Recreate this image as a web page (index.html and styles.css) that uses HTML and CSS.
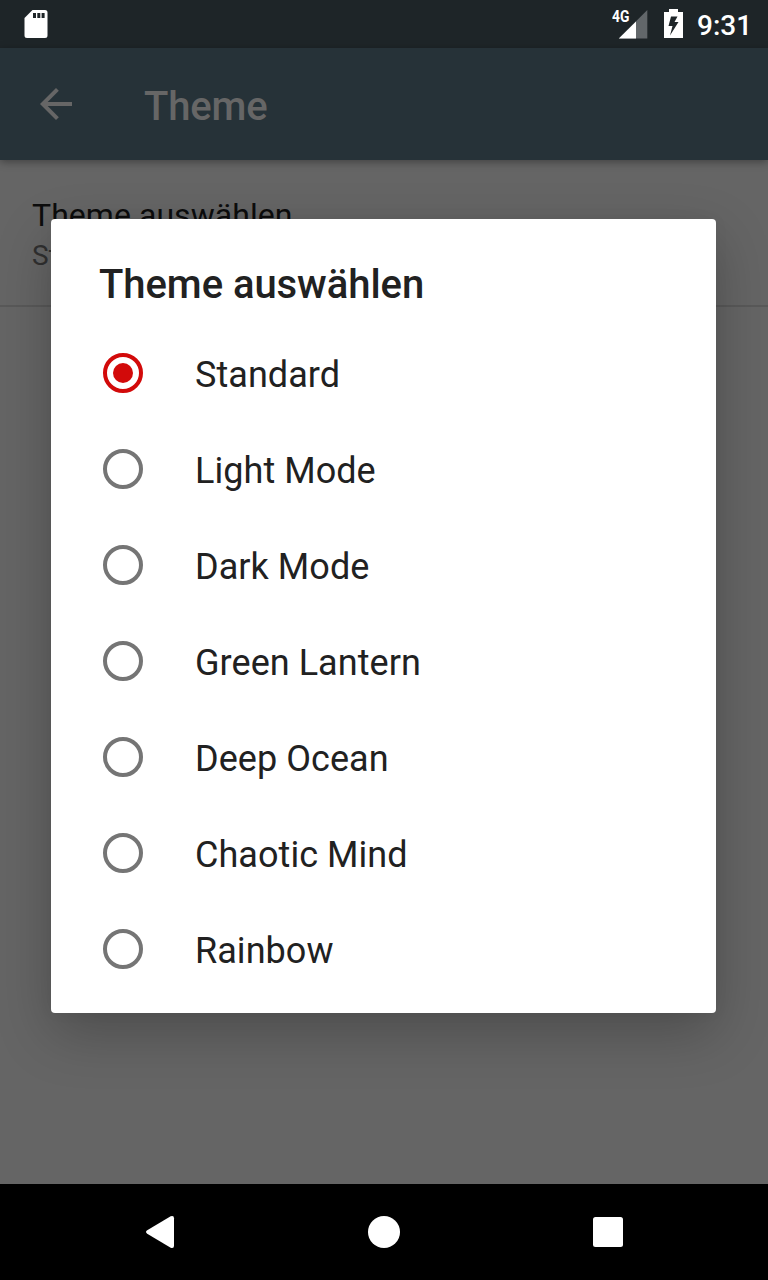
FILE: index.html
```html
<!DOCTYPE html>
<html lang="de">
<head>
<meta charset="utf-8">
<title>Theme</title>
<link rel="stylesheet" href="styles.css">
</head>
<body>
<div class="screen">
  <header class="status-bar">
    <svg class="sd-icon" width="24" height="30" viewBox="0 0 24 30"><path fill="#fff" fill-rule="evenodd" d="M8.500 0H21a2.500 2.500 0 0 1 2.500 2.500V25.500A2.500 2.500 0 0 1 21 28H3A2.500 2.500 0 0 1 .5 25.500V8zM9 3v5h3V3zM13.300 3v5h3V3zM17.600 3v5h3V3z"/></svg>
    <div class="status-right">
      <div class="signal">
        <span class="network">4G</span>
        <svg class="signal-icon" width="30" height="30" viewBox="0 0 30 30"><path fill="#62676a" d="M29.300 0V28.500H.8z"/><path fill="#fff" d="M18 11.500V28.500H.8z"/></svg>
      </div>
      <svg class="battery" width="19" height="30" viewBox="0 0 19 30"><path fill="#fff" fill-rule="evenodd" d="M5 0h9v3h5v26H0V3h5zM7 7.500L4.500 17H8.500L6 26.500L14.500 13H10.500L13.500 7.500z"/></svg>
      <span class="clock">9:31</span>
    </div>
  </header>
  <div class="app-bar">
    <svg class="back" width="32" height="32" viewBox="0 0 32 32"><path fill="#666" d="M32 14H7.660L18.840 2.820L16 0L0 16L16 32L18.820 29.180L7.660 18H32z"/></svg>
    <h1 class="app-title">Theme</h1>
  </div>
  <main class="content">
    <div class="preference">
      <div class="pref-title">Theme auswählen</div>
      <div class="pref-summary">Standard</div>
    </div>
  </main>
  <nav class="nav-bar">
    <svg width="32" height="34" viewBox="0 0 32 34"><path fill="#fff" d="M3.200 15.300L26.700 1.200Q30 0 30 3.300V30.700Q30 34 26.700 32.800L3.200 18.700Q.8 17 3.200 15.300z"/></svg>
    <svg width="32" height="32" viewBox="0 0 32 32"><circle cx="16" cy="16" r="16" fill="#fff"/></svg>
    <svg width="32" height="32" viewBox="0 0 32 32"><rect x="1" y="1" width="30" height="30" rx="2.500" fill="#fff"/></svg>
  </nav>
  <section class="dialog" role="dialog">
    <h2 class="dialog-title">Theme auswählen</h2>
    <ul class="options">
      <li class="option"><span class="radio checked"></span><span>Standard</span></li>
      <li class="option"><span class="radio"></span><span>Light Mode</span></li>
      <li class="option"><span class="radio"></span><span>Dark Mode</span></li>
      <li class="option"><span class="radio"></span><span>Green Lantern</span></li>
      <li class="option"><span class="radio"></span><span>Deep Ocean</span></li>
      <li class="option"><span class="radio"></span><span>Chaotic Mind</span></li>
      <li class="option"><span class="radio"></span><span>Rainbow</span></li>
    </ul>
  </section>
</div>
</body>
</html>
```
FILE: styles.css
```css
* { box-sizing: border-box; }

body {
  margin: 0;
  font-family: Roboto, "Liberation Sans", sans-serif;
}

.screen {
  position: relative;
  display: flex;
  flex-direction: column;
  width: 768px;
  height: 1280px;
  overflow: hidden;
  background: #656565;
}

.status-bar {
  display: flex;
  justify-content: space-between;
  align-items: flex-start;
  height: 48px;
  padding: 9px 17px 0 24px;
  background: #1e2528;
  color: #fff;
}

.sd-icon { margin-top: 1px; }

.status-right {
  display: flex;
  align-items: flex-start;
}

.signal {
  position: relative;
  width: 30px;
  margin-right: 16px;
}

.signal-icon { display: block; margin-top: 1px; }

.network {
  position: absolute;
  left: -6px;
  top: -1px;
  font: 700 16.500px/18px Roboto, sans-serif;
  transform: scaleX(.84);
  transform-origin: left;
}

.clock {
  width: 54px;
  margin-left: 14px;
  padding-top: 1px;
  font-size: 28px;
  font-weight: 500;
  line-height: 32px;
  white-space: nowrap;
}

.app-bar {
  display: flex;
  align-items: center;
  gap: 72px;
  height: 112px;
  padding: 0 40px;
  background: #263238;
  box-shadow: 0 2px 8px rgba(0, 0, 0, .36);
  z-index: 1;
  color: #666;
}

.app-title {
  margin: 5px 0 0;
  font-size: 40px;
  font-weight: 500;
  letter-spacing: -.15px;
}

.content { flex: 1; }

.preference {
  height: 147px;
  padding: 36px 32px 0;
  border-bottom: 2px solid #595959;
}

.pref-title {
  font-size: 32px;
  line-height: 38px;
  letter-spacing: .05px;
  color: #0d0d0d;
}

.pref-summary {
  margin-top: 5px;
  font-size: 28px;
  line-height: 33px;
  color: #303030;
}

.nav-bar {
  display: flex;
  justify-content: space-between;
  align-items: center;
  height: 96px;
  padding: 0 144px;
  background: #000;
}

.dialog {
  position: absolute;
  left: 51px;
  top: 219px;
  width: 665px;
  height: 794px;
  padding: 42px 48px 16px;
  border-radius: 4px;
  background: #fff;
  color: #212121;
  box-shadow: 0 20px 56px rgba(0, 0, 0, .24), 0 0 16px rgba(0, 0, 0, .04);
}

.dialog-title {
  margin: 0 0 17px;
  font-size: 40px;
  font-weight: 500;
  line-height: 47px;
  letter-spacing: -.06px;
}

.options {
  margin: 0;
  padding: 0;
  list-style: none;
}

.option {
  display: flex;
  align-items: center;
  gap: 52px;
  height: 96px;
  padding-left: 4px;
  font-size: 36px;
  line-height: 42px;
  letter-spacing: .05px;
}

.option span:last-child { padding-top: 4px; }

.radio {
  display: grid;
  place-items: center;
  width: 40px;
  height: 40px;
  border: 4px solid #757575;
  border-radius: 50%;
}

.radio.checked { border-color: #d20a0a; }

.radio.checked::after {
  content: "";
  width: 20px;
  height: 20px;
  border-radius: 50%;
  background: #d20a0a;
}
```
